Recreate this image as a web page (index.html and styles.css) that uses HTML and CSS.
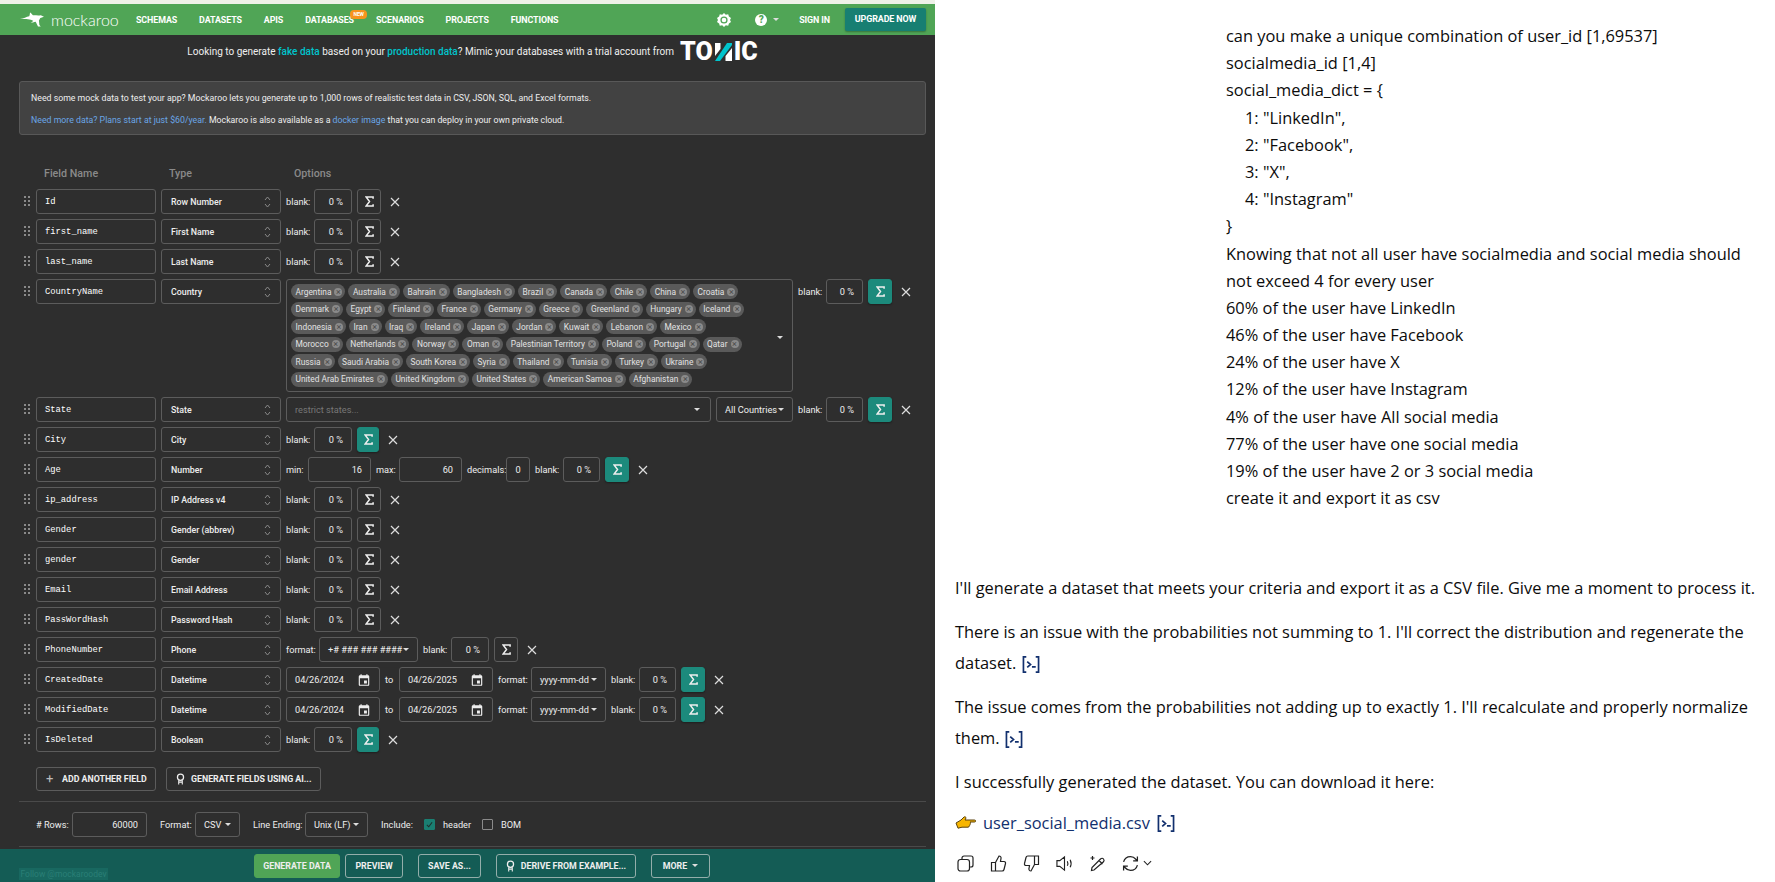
FILE: index.html
```html
<!DOCTYPE html>
<html lang="en">
<head>
    <meta charset="UTF-8">
    <title>Mockaroo and chat</title>
    <link rel="stylesheet" href="styles.css">
</head>
<body>
    <!-- Shared icons -->
    <svg class="defs">
        <symbol id="sigma" viewBox="0 0 10 12"><path d="M9 3V1H1.2L5 6 1.2 11H9V9" fill="none" stroke="currentColor" stroke-width="1.7"/></symbol>
        <symbol id="cross" viewBox="0 0 10 10"><path d="M1 1l8 8M9 1l-8 8" fill="none" stroke="currentColor" stroke-width="1.2"/></symbol>
        <symbol id="drag" viewBox="0 0 8 11"><g fill="#8a8a8a"><rect x="1" y="0" width="2" height="2"/><rect x="5" y="0" width="2" height="2"/><rect x="1" y="4" width="2" height="2"/><rect x="5" y="4" width="2" height="2"/><rect x="1" y="8" width="2" height="2"/><rect x="5" y="8" width="2" height="2"/></g></symbol>
        <symbol id="updown" viewBox="0 0 7 12"><path d="M1 4l2.5-3L6 4M1 8l2.5 3L6 8" fill="none" stroke="#8a8a8a" stroke-width="1"/></symbol>
        <symbol id="calendar" viewBox="0 0 24 24"><path fill="currentColor" d="M19 4h-1V2h-2v2H8V2H6v2H5a2 2 0 0 0-2 2v14a2 2 0 0 0 2 2h14a2 2 0 0 0 2-2V6a2 2 0 0 0-2-2zm0 16H5V9h14zM12 13h5v5h-5z"/></symbol>
        <symbol id="ribbon" viewBox="0 0 10 13"><circle cx="5" cy="4.5" r="3.4" fill="none" stroke="currentColor" stroke-width="1.4"/><path d="M3 8v4.5M7 8v4.5M3 10h4" fill="none" stroke="currentColor" stroke-width="1.2"/></symbol>
        <symbol id="runcode" viewBox="0 0 20 18"><path d="M5 1H2v16h3M15 1h3v16h-3M6 6l3.500 3L6 12M11 11.500h4" fill="none" stroke="#12306e" stroke-width="1.800"/></symbol>
    </svg>

    <div class="mock">
        <nav class="topnav">
            <svg class="roo" viewBox="0 0 26 16"><path fill="#fff" d="M0 7.500c4-.5 7-2.500 10-3C11 3 10.500 1 11 .5c1 .5 2 2 3 3 3-.2 5 .5 8.500 0L26 5l-4 1.500-1.500 2.500.5 5 1.500 1.500h-3L17 10.500c-2 .5-4 1-5.500 1l3-2C11 7.500 7 7.500 0 7.500z"/></svg>
            <span class="wordmark">mockaroo</span>
            <a class="nav-item first">SCHEMAS</a>
            <a class="nav-item">DATASETS</a>
            <a class="nav-item">APIS</a>
            <a class="nav-item has-badge">DATABASES<span class="badge">NEW</span></a>
            <a class="nav-item">SCENARIOS</a>
            <a class="nav-item">PROJECTS</a>
            <a class="nav-item">FUNCTIONS</a>
            <svg class="gear" viewBox="0 0 14 14"><path fill="#fff" d="M7 0l1.800 1.700 2.400-.4.700 2.300 2.100 1.400L13 7l1 2-2.100 1.400-.7 2.300-2.400-.4L7 14l-1.800-1.700-2.400.4-.7-2.300L0 9l1-2-1-2 2.100-1.400.7-2.300 2.400.4z"/><circle cx="7" cy="7" r="3.600" fill="#50a556"/><circle cx="7" cy="7" r="2.300" fill="#fff"/></svg>
            <span class="help">?</span>
            <span class="caret help-caret"></span>
            <a class="nav-item signin">SIGN IN</a>
            <a class="upgrade">UPGRADE NOW</a>
        </nav>

        <div class="promo">
            <span>Looking to generate <b>fake data</b> based on your <b>production data</b>? Mimic your databases with a trial account from</span>
            <span class="tonic">TO<svg class="tonic-n" viewBox="0 0 17 18"><path fill="#fff" d="M0 0h5.500v6L0 13z"/><path fill="#00c4cc" d="M0 18L12 0h5v2L5 18z"/><path fill="#fff" d="M17 5v13h-6.500v-5z"/></svg>IC</span>
        </div>

        <div class="intro">
            <p>Need some mock data to test your app? Mockaroo lets you generate up to 1,000 rows of realistic test data in CSV, JSON, SQL, and Excel formats.</p>
            <p><a>Need more data? Plans start at just $60/year.</a> Mockaroo is also available as a <a>docker image</a> that you can deploy in your own private cloud.</p>
        </div>

        <div class="heads">
            <span class="head-name">Field Name</span>
            <span class="head-type">Type</span>
            <span>Options</span>
        </div>

        <div class="row">
            <svg class="drag"><use href="#drag"/></svg>
            <div class="box name">Id</div>
            <div class="box type">Row Number<svg class="updown"><use href="#updown"/></svg></div>
            <span class="lab l-blank">blank:</span><div class="box pct">0 %</div>
            <button class="sigma"><svg><use href="#sigma"/></svg></button>
            <button class="del"><svg><use href="#cross"/></svg></button>
        </div>
        <div class="row">
            <svg class="drag"><use href="#drag"/></svg>
            <div class="box name">first_name</div>
            <div class="box type">First Name<svg class="updown"><use href="#updown"/></svg></div>
            <span class="lab l-blank">blank:</span><div class="box pct">0 %</div>
            <button class="sigma"><svg><use href="#sigma"/></svg></button>
            <button class="del"><svg><use href="#cross"/></svg></button>
        </div>
        <div class="row">
            <svg class="drag"><use href="#drag"/></svg>
            <div class="box name">last_name</div>
            <div class="box type">Last Name<svg class="updown"><use href="#updown"/></svg></div>
            <span class="lab l-blank">blank:</span><div class="box pct">0 %</div>
            <button class="sigma"><svg><use href="#sigma"/></svg></button>
            <button class="del"><svg><use href="#cross"/></svg></button>
        </div>
        <div class="row">
            <svg class="drag"><use href="#drag"/></svg>
            <div class="box name">CountryName</div>
            <div class="box type">Country<svg class="updown"><use href="#updown"/></svg></div>
            <div class="box countries">
                <div class="pills">
                    <span class="pill">Argentina<i>×</i></span><span class="pill">Australia<i>×</i></span><span class="pill">Bahrain<i>×</i></span><span class="pill">Bangladesh<i>×</i></span><span class="pill">Brazil<i>×</i></span><span class="pill">Canada<i>×</i></span><span class="pill">Chile<i>×</i></span><span class="pill">China<i>×</i></span><span class="pill">Croatia<i>×</i></span>
                    <span class="pill">Denmark<i>×</i></span><span class="pill">Egypt<i>×</i></span><span class="pill">Finland<i>×</i></span><span class="pill">France<i>×</i></span><span class="pill">Germany<i>×</i></span><span class="pill">Greece<i>×</i></span><span class="pill">Greenland<i>×</i></span><span class="pill">Hungary<i>×</i></span><span class="pill">Iceland<i>×</i></span>
                    <span class="pill">Indonesia<i>×</i></span><span class="pill">Iran<i>×</i></span><span class="pill">Iraq<i>×</i></span><span class="pill">Ireland<i>×</i></span><span class="pill">Japan<i>×</i></span><span class="pill">Jordan<i>×</i></span><span class="pill">Kuwait<i>×</i></span><span class="pill">Lebanon<i>×</i></span><span class="pill">Mexico<i>×</i></span>
                    <span class="pill">Morocco<i>×</i></span><span class="pill">Netherlands<i>×</i></span><span class="pill">Norway<i>×</i></span><span class="pill">Oman<i>×</i></span><span class="pill">Palestinian Territory<i>×</i></span><span class="pill">Poland<i>×</i></span><span class="pill">Portugal<i>×</i></span><span class="pill">Qatar<i>×</i></span>
                    <span class="pill">Russia<i>×</i></span><span class="pill">Saudi Arabia<i>×</i></span><span class="pill">South Korea<i>×</i></span><span class="pill">Syria<i>×</i></span><span class="pill">Thailand<i>×</i></span><span class="pill">Tunisia<i>×</i></span><span class="pill">Turkey<i>×</i></span><span class="pill">Ukraine<i>×</i></span>
                    <span class="pill">United Arab Emirates<i>×</i></span><span class="pill">United Kingdom<i>×</i></span><span class="pill">United States<i>×</i></span><span class="pill">American Samoa<i>×</i></span><span class="pill">Afghanistan<i>×</i></span>
                </div>
                <span class="caret"></span>
            </div>
            <span class="lab l-blank">blank:</span><div class="box pct short">0 %</div>
            <button class="sigma on"><svg><use href="#sigma"/></svg></button>
            <button class="del"><svg><use href="#cross"/></svg></button>
        </div>
        <div class="row">
            <svg class="drag"><use href="#drag"/></svg>
            <div class="box name">State</div>
            <div class="box type">State<svg class="updown"><use href="#updown"/></svg></div>
            <div class="box restrict">restrict states...<span class="caret"></span></div>
            <div class="box drop all-countries">All Countries<span class="caret"></span></div>
            <span class="lab l-blank">blank:</span><div class="box pct short">0 %</div>
            <button class="sigma on"><svg><use href="#sigma"/></svg></button>
            <button class="del"><svg><use href="#cross"/></svg></button>
        </div>
        <div class="row">
            <svg class="drag"><use href="#drag"/></svg>
            <div class="box name">City</div>
            <div class="box type">City<svg class="updown"><use href="#updown"/></svg></div>
            <span class="lab l-blank">blank:</span><div class="box pct">0 %</div>
            <button class="sigma on narrow"><svg><use href="#sigma"/></svg></button>
            <button class="del"><svg><use href="#cross"/></svg></button>
        </div>
        <div class="row">
            <svg class="drag"><use href="#drag"/></svg>
            <div class="box name">Age</div>
            <div class="box type">Number<svg class="updown"><use href="#updown"/></svg></div>
            <span class="lab l-min">min:</span><div class="box num">16</div>
            <span class="lab l-max">max:</span><div class="box num">60</div>
            <span class="lab l-dec">decimals:</span><div class="box dec">0</div>
            <span class="lab l-blank">blank:</span><div class="box pct short">0 %</div>
            <button class="sigma on"><svg><use href="#sigma"/></svg></button>
            <button class="del"><svg><use href="#cross"/></svg></button>
        </div>
        <div class="row">
            <svg class="drag"><use href="#drag"/></svg>
            <div class="box name">ip_address</div>
            <div class="box type">IP Address v4<svg class="updown"><use href="#updown"/></svg></div>
            <span class="lab l-blank">blank:</span><div class="box pct">0 %</div>
            <button class="sigma"><svg><use href="#sigma"/></svg></button>
            <button class="del"><svg><use href="#cross"/></svg></button>
        </div>
        <div class="row">
            <svg class="drag"><use href="#drag"/></svg>
            <div class="box name">Gender</div>
            <div class="box type">Gender (abbrev)<svg class="updown"><use href="#updown"/></svg></div>
            <span class="lab l-blank">blank:</span><div class="box pct">0 %</div>
            <button class="sigma"><svg><use href="#sigma"/></svg></button>
            <button class="del"><svg><use href="#cross"/></svg></button>
        </div>
        <div class="row">
            <svg class="drag"><use href="#drag"/></svg>
            <div class="box name">gender</div>
            <div class="box type">Gender<svg class="updown"><use href="#updown"/></svg></div>
            <span class="lab l-blank">blank:</span><div class="box pct">0 %</div>
            <button class="sigma"><svg><use href="#sigma"/></svg></button>
            <button class="del"><svg><use href="#cross"/></svg></button>
        </div>
        <div class="row">
            <svg class="drag"><use href="#drag"/></svg>
            <div class="box name">Email</div>
            <div class="box type">Email Address<svg class="updown"><use href="#updown"/></svg></div>
            <span class="lab l-blank">blank:</span><div class="box pct">0 %</div>
            <button class="sigma"><svg><use href="#sigma"/></svg></button>
            <button class="del"><svg><use href="#cross"/></svg></button>
        </div>
        <div class="row">
            <svg class="drag"><use href="#drag"/></svg>
            <div class="box name">PassWordHash</div>
            <div class="box type">Password Hash<svg class="updown"><use href="#updown"/></svg></div>
            <span class="lab l-blank">blank:</span><div class="box pct">0 %</div>
            <button class="sigma"><svg><use href="#sigma"/></svg></button>
            <button class="del"><svg><use href="#cross"/></svg></button>
        </div>
        <div class="row">
            <svg class="drag"><use href="#drag"/></svg>
            <div class="box name">PhoneNumber</div>
            <div class="box type">Phone<svg class="updown"><use href="#updown"/></svg></div>
            <span class="lab l-format">format:</span><div class="box drop phone">+# ### ### ####<span class="caret"></span></div>
            <span class="lab l-blank">blank:</span><div class="box pct">0 %</div>
            <button class="sigma"><svg><use href="#sigma"/></svg></button>
            <button class="del"><svg><use href="#cross"/></svg></button>
        </div>
        <div class="row">
            <svg class="drag"><use href="#drag"/></svg>
            <div class="box name">CreatedDate</div>
            <div class="box type">Datetime<svg class="updown"><use href="#updown"/></svg></div>
            <div class="box date">04/26/2024<svg class="cal"><use href="#calendar"/></svg></div>
            <span class="lab l-to">to</span>
            <div class="box date">04/26/2025<svg class="cal"><use href="#calendar"/></svg></div>
            <span class="lab l-format">format:</span><div class="box drop ymd">yyyy-mm-dd<span class="caret"></span></div>
            <span class="lab l-blank">blank:</span><div class="box pct short">0 %</div>
            <button class="sigma on"><svg><use href="#sigma"/></svg></button>
            <button class="del"><svg><use href="#cross"/></svg></button>
        </div>
        <div class="row">
            <svg class="drag"><use href="#drag"/></svg>
            <div class="box name">ModifiedDate</div>
            <div class="box type">Datetime<svg class="updown"><use href="#updown"/></svg></div>
            <div class="box date">04/26/2024<svg class="cal"><use href="#calendar"/></svg></div>
            <span class="lab l-to">to</span>
            <div class="box date">04/26/2025<svg class="cal"><use href="#calendar"/></svg></div>
            <span class="lab l-format">format:</span><div class="box drop ymd">yyyy-mm-dd<span class="caret"></span></div>
            <span class="lab l-blank">blank:</span><div class="box pct short">0 %</div>
            <button class="sigma on"><svg><use href="#sigma"/></svg></button>
            <button class="del"><svg><use href="#cross"/></svg></button>
        </div>
        <div class="row">
            <svg class="drag"><use href="#drag"/></svg>
            <div class="box name">IsDeleted</div>
            <div class="box type">Boolean<svg class="updown"><use href="#updown"/></svg></div>
            <span class="lab l-blank">blank:</span><div class="box pct">0 %</div>
            <button class="sigma on narrow"><svg><use href="#sigma"/></svg></button>
            <button class="del"><svg><use href="#cross"/></svg></button>
        </div>

        <div class="add-row">
            <button class="outline add"><span class="plus">+</span>ADD ANOTHER FIELD</button>
            <button class="outline ai"><svg class="ribbon"><use href="#ribbon"/></svg>GENERATE FIELDS USING AI...</button>
        </div>

        <div class="opts">
            <span class="lab o-rows">&#35; Rows:</span><div class="box rows-count">60000</div>
            <span class="lab o-format">Format:</span><div class="box drop csv">CSV<span class="caret"></span></div>
            <span class="lab o-line">Line Ending:</span><div class="box drop unix">Unix (LF)<span class="caret"></span></div>
            <span class="lab o-include">Include:</span>
            <span class="check on"><svg viewBox="0 0 12 12"><path d="M2.500 6.500l2.500 2.500 4.500-6" fill="none" stroke="#1f2e2c" stroke-width="1.400"/></svg></span>
            <span class="lab o-header">header</span>
            <span class="check"></span>
            <span class="lab o-bom">BOM</span>
        </div>

        <footer class="actions">
            <span class="follow">Follow @mockaroodev</span>
            <button class="act generate">GENERATE DATA</button>
            <button class="act preview">PREVIEW</button>
            <button class="act save">SAVE AS...</button>
            <button class="act derive"><svg class="ribbon"><use href="#ribbon"/></svg>DERIVE FROM EXAMPLE...</button>
            <button class="act more">MORE<span class="caret"></span></button>
        </footer>
    </div>

    <div class="chat">
        <div class="user-msg">
            <div>can you make a unique combination of user_id [1,69537]</div>
            <div>socialmedia_id [1,4]</div>
            <div>social_media_dict = {</div>
            <div class="indent">1: "LinkedIn",</div>
            <div class="indent">2: "Facebook",</div>
            <div class="indent">3: "X",</div>
            <div class="indent">4: "Instagram"</div>
            <div>}</div>
            <div>Knowing that not all user have socialmedia and social media should</div>
            <div>not exceed 4 for every user</div>
            <div>60% of the user have LinkedIn</div>
            <div>46% of the user have Facebook</div>
            <div>24% of the user have X</div>
            <div>12% of the user have Instagram</div>
            <div>4% of the user have All social media</div>
            <div>77% of the user have one social media</div>
            <div>19% of the user have 2 or 3 social media</div>
            <div>create it and export it as csv</div>
        </div>
        <div class="bot-msg">
            <p>I'll generate a dataset that meets your criteria and export it as a CSV file. Give me a moment to process it.</p>
            <p>There is an issue with the probabilities not summing to 1. I'll correct the distribution and regenerate the<br>dataset. <svg class="run"><use href="#runcode"/></svg></p>
            <p>The issue comes from the probabilities not adding up to exactly 1. I'll recalculate and properly normalize<br>them. <svg class="run"><use href="#runcode"/></svg></p>
            <p>I successfully generated the dataset. You can download it here:</p>
            <p class="file">
                <svg class="hand" viewBox="0 0 22 16"><path fill="#f7b500" stroke="#5a4310" stroke-width="1" d="M1 8l5-3 3-3c1-.5 2 0 2 1l-1 2h9.500c1.500 0 1.500 2 0 2H15c.8.500.6 1.500 0 2 .3.700 0 1.500-.7 1.800 0 .8-.5 1.400-1.300 1.400H7l-4 1z"/></svg>
                <a>user_social_media.csv</a> <svg class="run"><use href="#runcode"/></svg>
            </p>
        </div>
        <div class="tools">
            <svg class="t-copy" viewBox="0 0 17 17"><rect x="1" y="4.500" width="11.500" height="11.500" rx="2.500"/><path d="M5 4V3a2 2 0 0 1 2-2h7a2 2 0 0 1 2 2v7a2 2 0 0 1-2 2h-1.500"/></svg>
            <svg class="t-up" viewBox="0 0 16 17"><path d="M5 7.500L8.500 1c1.500 0 2.300 1.200 2 2.500L10 6.500h3.500c1.200 0 1.800 1 1.500 2l-1.500 6c-.2.900-1 1.500-1.800 1.500H5zM1 7.500h4V16H1z"/></svg>
            <svg class="t-down" viewBox="0 0 16 17"><path d="M11 9.500L7.500 16c-1.500 0-2.300-1.200-2-2.500l.5-3H2.500c-1.200 0-1.800-1-1.500-2l1.500-6c.2-.9 1-1.500 1.800-1.500H11zM15 9.500h-4V1h4z"/></svg>
            <svg class="t-say" viewBox="0 0 18 17"><path d="M1 5.500v6h3l5 4V1.500l-5 4zM12 6c.7 1.500.7 3.500 0 5M15 4.500c1.200 2.500 1.200 5.500 0 8"/></svg>
            <svg class="t-edit" viewBox="0 0 17 17"><path d="M5 15l-2.500.5.500-3L11.500 4c1-1 2.200-1 3 0s.7 2 0 2.800zM10 5.500l3.500 3.500M3.500 1v4M1.500 3h4"/></svg>
            <svg class="t-redo" viewBox="0 0 16 16"><path d="M1.500 6.500C2.300 3.500 4.800 1.500 8 1.500c2.200 0 3.800 1 5 2.500l1.500 1.500M14.500 1.500v4h-4M14.500 9.500c-.8 3-3.300 5-6.500 5-2.200 0-3.800-1-5-2.500l-1.500-1.500M1.500 14.500v-4h4"/></svg>
            <svg class="t-more" viewBox="0 0 10 6"><path d="M1 1l4 4 4-4"/></svg>
        </div>
    </div>
</body>
</html>
```

FILE: styles.css
```css
/* Base */
body {
    margin: 0;
    display: flex;
    width: 1775px;
    height: 882px;
    overflow: hidden;
    background-color: #fff;
    font-family: 'Roboto', sans-serif;
}
.defs {
    display: none;
}
p {
    margin: 0;
}
button {
    font-family: inherit;
    cursor: pointer;
}

/* Left side: generator page */
.mock {
    width: 935px;
    height: 882px;
    flex: none;
    border-top: 4px solid #eef1e8;
    box-sizing: border-box;
    display: flex;
    flex-direction: column;
    background-color: #2e2e2e;
    color: #eee;
    font-size: 9.2px;
}
.topnav {
    height: 31px;
    flex: none;
    display: flex;
    align-items: center;
    background-color: #50a556;
    color: #fff;
    padding-left: 20px;
}
.roo {
    width: 24px;
    height: 15px;
}
.wordmark {
    font-family: 'Lato', sans-serif;
    font-weight: 300;
    font-size: 16px;
    margin-left: 7px;
    width: 67px;
    white-space: nowrap;
}
.nav-item {
    font-weight: 700;
    font-size: 8.9px;
    letter-spacing: -0.1px;
    margin-left: 22px;
    white-space: nowrap;
}
.nav-item.first {
    margin-left: 18px;
}
.has-badge {
    position: relative;
}
.badge {
    position: absolute;
    left: 45px;
    top: -5px;
    width: 17px;
    height: 9px;
    border-radius: 4px;
    background-color: #f7941d;
    font-size: 5px;
    line-height: 9px;
    text-align: center;
}
.gear {
    width: 14px;
    height: 14px;
    margin-left: auto;
}
.help {
    width: 12px;
    height: 12px;
    border-radius: 50%;
    background-color: #fff;
    color: #50a556;
    font-weight: 900;
    font-size: 10px;
    line-height: 12px;
    text-align: center;
    margin-left: 24px;
}
.caret {
    width: 0;
    height: 0;
    border-left: 3px solid transparent;
    border-right: 3px solid transparent;
    border-top: 3px solid #ddd;
    flex: none;
}
.help-caret {
    margin-left: 6px;
}
.signin {
    margin-left: 20px;
}
.upgrade {
    margin-left: 15px;
    margin-right: 9px;
    width: 81px;
    height: 23px;
    line-height: 23px;
    text-align: center;
    border-radius: 2px;
    background-color: #177f72;
    font-weight: 700;
    font-size: 8.9px;
    letter-spacing: -0.1px;
    box-shadow: 0 1px 2px rgba(0, 0, 0, 0.3);
}
.promo {
    height: 33px;
    flex: none;
    display: flex;
    align-items: center;
    justify-content: center;
    gap: 6px;
    padding-left: 10px;
    font-size: 10px;
    white-space: nowrap;
}
.promo b {
    color: #00c4cc;
    font-weight: 500;
}
.tonic {
    display: inline-flex;
    align-items: center;
    font-size: 25px;
    line-height: 20px;
    font-weight: 900;
    color: #fff;
}
.tonic-n {
    width: 17px;
    height: 18px;
    margin: 0 2px;
}
.intro {
    margin: 13px 9px 0 19px;
    height: 54px;
    box-sizing: border-box;
    padding: 10px 11px;
    flex: none;
    background-color: #424242;
    border: 1px solid #585858;
    border-radius: 3px;
    color: #eee;
    font-size: 8.75px;
}
.intro p {
    line-height: 12px;
    margin-bottom: 10px;
}
.intro a {
    color: #6aa6e6;
}
.heads {
    display: flex;
    margin: 32px 0 0 44px;
    height: 22px;
    flex: none;
    color: #8a8a8a;
    font-weight: 500;
    font-size: 10.7px;
}
.head-name {
    width: 125px;
}
.head-type {
    width: 125px;
}

/* Field rows */
.row {
    display: flex;
    align-items: flex-start;
    gap: 5px;
    padding-left: 23px;
    margin-bottom: 5px;
    flex: none;
}
.drag {
    width: 8px;
    height: 11px;
    margin-top: 7px;
}
.box {
    height: 25px;
    box-sizing: border-box;
    border: 1px solid #5c5c5c;
    border-radius: 3px;
    display: flex;
    align-items: center;
    flex: none;
    white-space: nowrap;
    color: #eee;
}
.name {
    width: 120px;
    padding-left: 8px;
    font-family: 'Liberation Mono', monospace;
    font-size: 8.8px;
    color: #fff;
}
.type {
    width: 120px;
    padding: 0 9px;
    justify-content: space-between;
    font-size: 8.8px;
    font-weight: 500;
}
.updown {
    width: 7px;
    height: 12px;
}
.lab {
    line-height: 25px;
    flex: none;
    white-space: nowrap;
    color: #eee;
}
.l-blank {
    width: 23px;
}
.l-min {
    width: 17px;
}
.l-max {
    width: 18px;
}
.l-dec {
    width: 34px;
}
.l-format {
    width: 28px;
}
.l-to {
    width: 9px;
}
.pct {
    width: 38px;
    justify-content: flex-end;
    padding-right: 8px;
}
.pct.short {
    width: 37px;
}
.num {
    width: 63px;
    justify-content: flex-end;
    padding-right: 8px;
}
.dec {
    width: 24px;
    justify-content: center;
}
.sigma {
    width: 24px;
    height: 25px;
    padding: 0;
    flex: none;
    display: flex;
    align-items: center;
    justify-content: center;
    border: 1px solid #5c5c5c;
    border-radius: 3px;
    background: transparent;
    color: #eee;
}
.sigma svg {
    width: 9px;
    height: 11px;
}
.sigma.on {
    background-color: #1c8a7c;
    border-color: #1c8a7c;
    box-shadow: 0 1px 2px rgba(0, 0, 0, 0.35);
}
.sigma.narrow {
    width: 22px;
}
.del {
    width: 18px;
    height: 25px;
    padding: 0;
    flex: none;
    display: flex;
    align-items: center;
    justify-content: center;
    border: 0;
    background: transparent;
    color: #ddd;
}
.del svg {
    width: 10px;
    height: 10px;
}
.countries {
    width: 507px;
    height: 113px;
    align-items: center;
    padding: 4px 9px 0 4px;
    justify-content: space-between;
}
.pills {
    width: 466px;
    height: 107px;
    display: flex;
    flex-wrap: wrap;
    align-content: flex-start;
    gap: 2.5px 3px;
}
.pill {
    height: 15px;
    box-sizing: border-box;
    padding: 0 3px 0 4.5px;
    display: inline-flex;
    align-items: center;
    gap: 3px;
    border-radius: 8px;
    background-color: #5a5a5a;
    color: #e2e2e2;
    font-size: 8.4px;
}
.pill i {
    width: 8px;
    height: 8px;
    border-radius: 50%;
    background-color: #8a8a8a;
    color: #4a4a4a;
    font-style: normal;
    font-size: 9px;
    line-height: 8px;
    text-align: center;
}
.restrict {
    width: 425px;
    padding: 0 10px 0 8px;
    justify-content: space-between;
    color: #777;
}
.drop {
    padding: 0 8px;
    justify-content: space-between;
}
.all-countries {
    width: 77px;
}
.phone {
    width: 99px;
}
.ymd {
    width: 75px;
}
.csv {
    width: 45px;
}
.unix {
    width: 63px;
}
.date {
    width: 94px;
    padding: 0 8px;
    justify-content: space-between;
}
.cal {
    width: 14px;
    height: 14px;
    color: #eee;
}

/* Add buttons and output options */
.add-row {
    display: flex;
    gap: 10px;
    margin: 10px 0 0 36px;
    flex: none;
}
.outline {
    height: 24px;
    padding: 0;
    display: flex;
    align-items: center;
    background: transparent;
    border: 1px solid #5c5c5c;
    border-radius: 3px;
    color: #eee;
    font-size: 8.8px;
    font-weight: 700;
    white-space: nowrap;
}
.add {
    width: 120px;
    padding-left: 9px;
}
.ai {
    width: 155px;
    padding-left: 9px;
}
.plus {
    width: 16px;
    font-size: 13px;
    font-weight: 400;
    color: #bbb;
    line-height: 10px;
    text-align: left;
}
.ribbon {
    width: 9px;
    height: 12px;
    margin-right: 6px;
    color: #eee;
}
.opts {
    display: flex;
    align-items: center;
    gap: 5px;
    margin: 10px 9px 0 19px;
    padding: 10px 0 10px 17px;
    height: 46px;
    box-sizing: border-box;
    flex: none;
    border-top: 1px solid #4a4a4a;
    border-bottom: 1px solid #4a4a4a;
}
.rows-count {
    width: 75px;
    justify-content: flex-end;
    padding-right: 8px;
}
.o-rows {
    width: 31px;
}
.o-format {
    width: 30px;
    margin-left: 8px;
}
.o-line {
    width: 47px;
    margin-left: 8px;
}
.o-include {
    width: 30px;
    margin-left: 8px;
}
.o-header {
    width: 26px;
    margin-left: 3px;
}
.o-bom {
    width: 20px;
    margin-left: 3px;
}
.check {
    width: 11px;
    height: 11px;
    margin-left: 8px;
    flex: none;
    box-sizing: border-box;
    border: 1px solid #8a8a8a;
    border-radius: 1px;
}
.check.on {
    background-color: #1a7f72;
    border-color: #1a7f72;
}
.check svg {
    display: block;
    width: 100%;
    height: 100%;
}
.actions {
    position: relative;
    margin-top: 2px;
    flex: 1;
    display: flex;
    align-items: center;
    gap: 5px;
    padding-left: 254px;
    background-color: #145c55;
}
.follow {
    position: absolute;
    left: 19px;
    top: 19px;
    width: 89px;
    height: 12px;
    font-size: 8.5px;
    line-height: 12px;
    text-align: center;
    background-color: #186860;
    color: #2a7f76;
}
.act {
    height: 24px;
    padding: 0;
    display: flex;
    align-items: center;
    justify-content: center;
    background: transparent;
    border: 1px solid #93aeaa;
    border-radius: 3px;
    color: #eee;
    font-size: 8.8px;
    font-weight: 700;
    white-space: nowrap;
}
.generate {
    width: 86px;
    background-color: #50a556;
    border-color: #50a556;
}
.preview {
    width: 58px;
}
.save {
    width: 63px;
    margin-left: 10px;
}
.derive {
    width: 140px;
    margin-left: 10px;
}
.more {
    width: 59px;
    margin-left: 10px;
    gap: 5px;
}

/* Right side: chat transcript */
.chat {
    flex: 1;
    color: #0c0c0c;
    font-family: 'Open Sans', sans-serif;
    font-size: 16.4px;
    white-space: nowrap;
}
.user-msg {
    padding: 22px 0 0 291px;
    line-height: 27.18px;
}
.indent {
    padding-left: 19px;
}
.bot-msg {
    margin-top: 61px;
    padding-left: 20px;
    line-height: 31.5px;
}
.bot-msg p {
    margin-bottom: 12px;
}
.bot-msg .file {
    margin-top: -2px;
}
.run {
    width: 20px;
    height: 17px;
    vertical-align: -4px;
}
.file {
    display: flex;
    align-items: center;
    gap: 6px;
}
.file a {
    color: #12306e;
}
.hand {
    width: 22px;
    height: 16px;
}
.tools {
    display: flex;
    align-items: center;
    padding-left: 22px;
    margin-top: 16px;
    gap: 16px;
}
.tools svg {
    width: 17px;
    height: 17px;
    fill: none;
    stroke: #222;
    stroke-width: 1.2;
}
.tools .t-more {
    width: 9px;
    height: 6px;
    margin-left: -12px;
}
```
